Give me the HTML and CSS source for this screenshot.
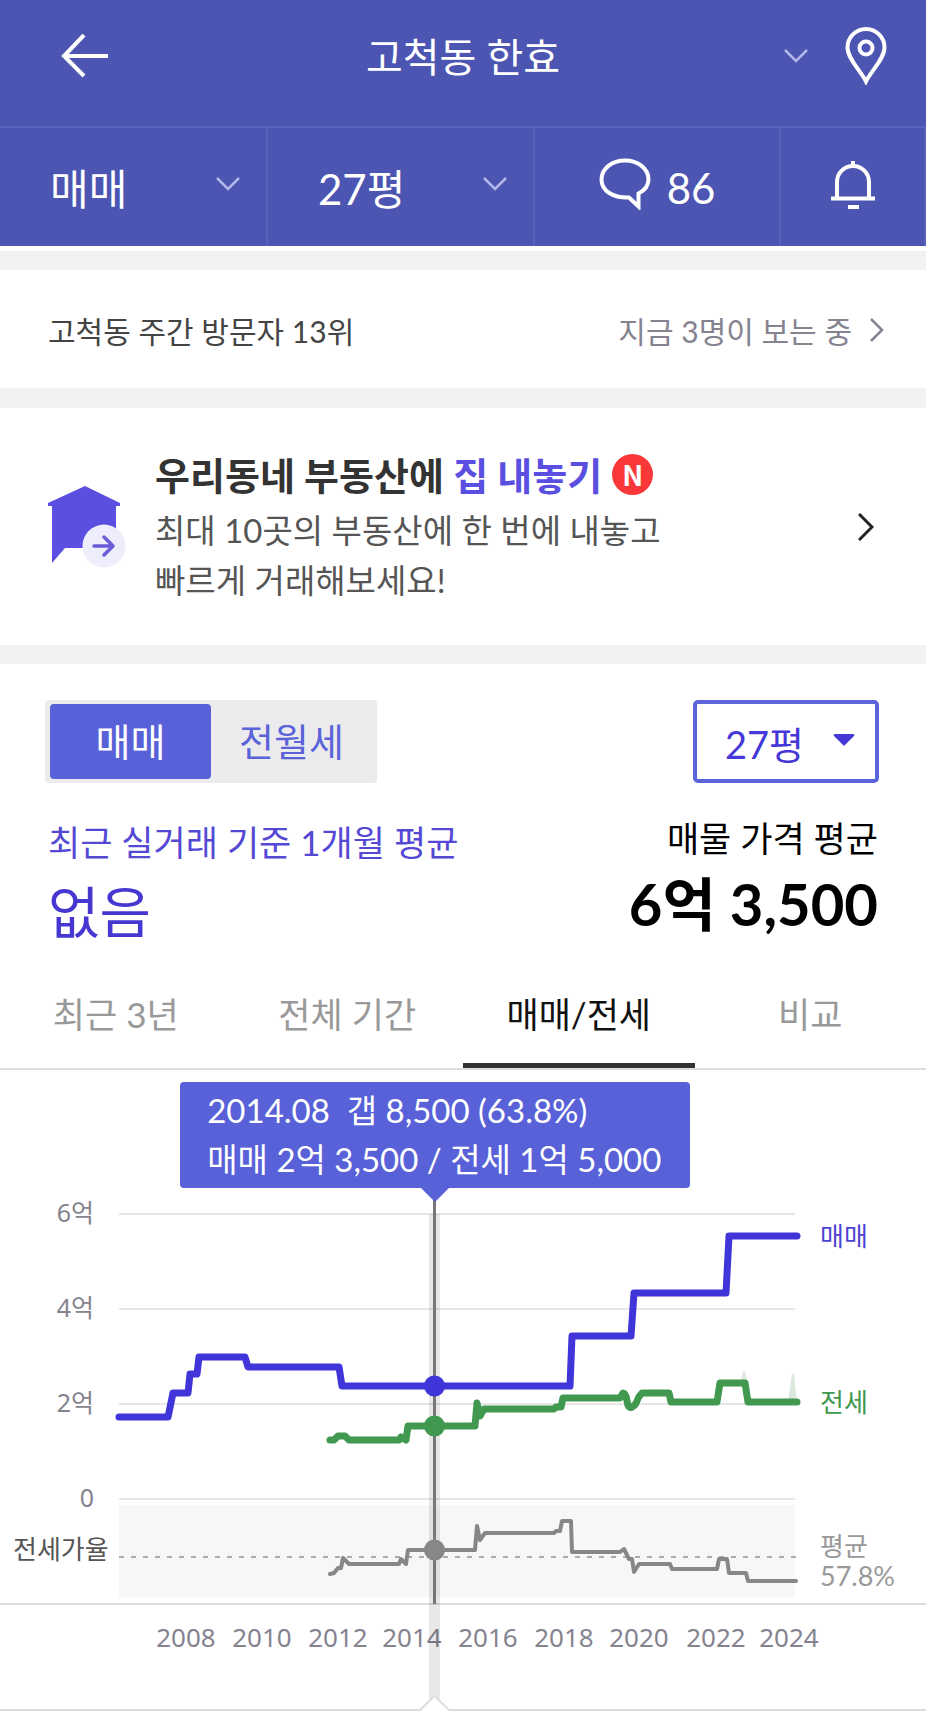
FILE: index.html
```html
<!DOCTYPE html>
<html lang="ko">
<head>
<meta charset="utf-8">
<meta name="viewport" content="width=device-width, initial-scale=1">
<title>고척동 한효</title>
<link rel="stylesheet" href="styles.css">
</head>
<body>
<header class="header">
  <div class="header-top">
    <button class="icon-button back" type="button" aria-label="뒤로">
      <svg width="48" height="44" viewBox="0 0 48 44" fill="none" stroke="currentColor" stroke-width="4"><path d="M47 22H3M23 1 3 22l20 20"/></svg>
    </button>
    <button class="title" type="button">고척동 한효</button>
    <svg class="chevron" width="24" height="14" viewBox="0 0 24 14" fill="none" stroke="currentColor" stroke-width="2.500"><path d="m1 1 11 11L23 1"/></svg>
    <button class="icon-button" type="button" aria-label="지도">
      <svg width="42" height="58" viewBox="0 0 42 58" fill="none" stroke="currentColor" stroke-width="4"><path d="M21 54.500C16 44 2.500 32 2.500 20.500a18.500 18.500 0 0 1 37 0C39.500 32 26 44 21 54.500z"/><circle cx="21" cy="21" r="6.500"/></svg>
    </button>
  </div>
  <div class="header-menu">
    <div class="menu-cell menu-select">
      <select aria-label="거래 유형"><option>매매</option><option>전월세</option></select>
      <svg class="chevron" width="24" height="14" viewBox="0 0 24 14" fill="none" stroke="currentColor" stroke-width="2.500"><path d="m1 1 11 11L23 1"/></svg>
    </div>
    <div class="menu-cell menu-select">
      <select aria-label="평형"><option>27평</option></select>
      <svg class="chevron" width="24" height="14" viewBox="0 0 24 14" fill="none" stroke="currentColor" stroke-width="2.500"><path d="m1 1 11 11L23 1"/></svg>
    </div>
    <button class="menu-cell comments" type="button">
      <svg width="52" height="52" viewBox="0 0 52 52" fill="none" stroke="currentColor" stroke-width="4"><path d="M30 39.500C14 40 2.500 33 2.500 21.500 2.500 10.500 13 2.500 26 2.500S49.500 10.500 49.500 21.500c0 7-4 11-10 14v13z"/></svg>
      <span>86</span>
    </button>
    <button class="menu-cell alarm" type="button" aria-label="알림">
      <svg width="44" height="50" viewBox="0 0 44 50" fill="none" stroke="currentColor" stroke-width="4"><path d="M22 1v5M6 38V22a16 16 0 0 1 32 0v16M0 38.500h44M17 47h11"/></svg>
    </button>
  </div>
</header>
<main>
  <section class="visitors">
    <span>고척동 주간 방문자 13위</span>
    <a class="viewing" href="#viewing">지금 3명이 보는 중
      <svg width="14" height="24" viewBox="0 0 14 24" fill="none" stroke="currentColor" stroke-width="2.500"><path d="m1 1 11 11L1 23"/></svg>
    </a>
  </section>
  <a class="promo" href="#sell">
    <svg class="promo-icon" width="78" height="82" viewBox="0 0 78 82"><path fill="#5a4fe0" d="M37 0 72 17v3h-4v42H17L4 77V20H0v-3z"/><circle cx="56" cy="60" r="21.500" fill="#eeedfc"/><path d="M46 60h19M56 51l9 9-9 9" fill="none" stroke="#6b5bd8" stroke-width="3.500" stroke-linecap="round" stroke-linejoin="round"/></svg>
    <span class="promo-text">
      <strong class="promo-title"><span>우리동네 부동산에 <em>집 내놓기</em></span><span class="badge">N</span></strong>
      <span class="promo-body">최대 10곳의 부동산에 한 번에 내놓고<br>빠르게 거래해보세요!</span>
    </span>
    <svg class="promo-arrow" width="16" height="28" viewBox="0 0 16 28" fill="none" stroke="currentColor" stroke-width="3"><path d="m1 1 13 13L1 27"/></svg>
  </a>
  <section class="price">
    <div class="filters">
      <div class="toggle">
        <button class="selected" type="button" aria-pressed="true">매매</button>
        <button type="button" aria-pressed="false">전월세</button>
      </div>
      <div class="area">
        <select aria-label="면적 선택"><option>27평</option></select>
        <svg width="22" height="14" viewBox="0 0 22 14"><path fill="#4537d8" d="M2 1h18q2 0 1 2l-9 9q-1 1-2 0L1 3Q0 1 2 1z"/></svg>
      </div>
    </div>
    <div class="averages">
      <div class="recent"><p>최근 실거래 기준 1개월 평균</p><strong>없음</strong></div>
      <div class="asking"><p>매물 가격 평균</p><strong>6억 3,500</strong></div>
    </div>
    <div class="tabs" role="tablist">
      <button type="button" role="tab">최근 3년</button>
      <button type="button" role="tab">전체 기간</button>
      <button class="active" type="button" role="tab" aria-selected="true">매매/전세</button>
      <button type="button" role="tab">비교</button>
    </div>
    <div class="chart">
      <svg class="plot" viewBox="0 0 926 654" role="img" aria-label="매매 전세 가격 추이">
        <rect class="ratio-bg" x="119" y="435" width="676" height="92"/>
        <path class="grid" d="M119 144h676M119 239h676M119 334h676M119 429h676"/>
        <path class="rule" d="M0 534h926"/>
        <g class="axis years">
          <text x="186" y="577">2008</text><text x="262" y="577">2010</text><text x="338" y="577">2012</text>
          <text x="412" y="577">2014</text><text x="488" y="577">2016</text><text x="564" y="577">2018</text>
          <text x="639" y="577">2020</text><text x="716" y="577">2022</text><text x="789" y="577">2024</text>
        </g>
        <path class="cursor-band" d="M429 144h11v496h-11z"/>
        <path class="average" d="M119 487h682"/>
        <path class="cursor" d="M434.500 125v409"/>
        <path class="outliers" d="M740 313l3-12h2l3 12zM788 332l4-28h2l3 28z"/>
        <path class="ratio" d="M330 504l4-1 4-5h3l2-10 6 6h50l2-5 5 5 2-14h67l2-24 3 14 5-7h69l2-2h4l2-10h9l1 31h48l4-3 5 10h3l2 13 5-8h31l2 5h45l2-10h8l2 14h17l2 8h48"/>
        <path class="lease" d="M330 370h4l4-4h7l4 4h50l2-3 5 3 2-14h67l2-23 3 13 4-7h70l2-2h5l2-9h57l3-5q3 0 4 8t5 6 5-6 5-8h27l2 9h46l3-19h25l3 19h49"/>
        <path class="sale" d="M119 347h49l5-24h15l2-19h7l2-17h46l3 10h91l3 19h228l2-50h59l3-43h92l3-57h68"/>
        <circle cx="434.500" cy="316" r="10.500" fill="#4035d8"/>
        <circle cx="434.500" cy="356" r="10.500" fill="#40994f"/>
        <circle cx="434.500" cy="480" r="10.500" fill="#878787"/>
        <g class="axis values">
          <text x="94" y="152">6억</text><text x="94" y="247">4억</text><text x="94" y="342">2억</text><text x="94" y="437">0</text>
        </g>
        <text class="ratio-label" x="13" y="489">전세가율</text>
        <text class="sale-label" x="820" y="176">매매</text>
        <text class="lease-label" x="820" y="342">전세</text>
        <g class="average-label"><text x="820" y="486">평균</text><text class="percent" x="820" y="516">57.8%</text></g>
        <path class="notch" d="M0 640h420l14.500-14L449 640h477"/>
      </svg>
      <div class="tooltip">2014.08&nbsp; 갭 8,500 (63.8%)<br>매매 2억 3,500 / 전세 1억 5,000</div>
    </div>
  </section>
</main>
</body>
</html>
```
FILE: styles.css
```css
* { box-sizing: border-box; }
body {
  margin: 0;
  background: #fff;
  color: #444;
  font-family: Lato, "Noto Sans CJK KR", sans-serif;
  font-size: 30px;
}
button, select {
  margin: 0;
  padding: 0;
  border: 0;
  background: none;
  color: inherit;
  font: inherit;
  appearance: none;
}
a { color: inherit; text-decoration: none; }
p { margin: 0; }
svg { display: block; flex: none; }

.header { background: #4d55b2; color: #fff; }
.header-top {
  display: grid;
  grid-template-columns: 170px 1fr 80px 60px;
  align-items: center;
  height: 126px;
  padding: 0 30px 14px 0;
}
.icon-button { justify-self: center; }
.title { font-size: 40px; padding-bottom: 3px; }
.header-top .chevron { justify-self: center; }
.chevron { color: #b4b7ec; pointer-events: none; }
.header-menu {
  display: grid;
  grid-template-columns: 268fr 267fr 246fr 145fr;
  height: 120px;
  border-top: 2px solid #5a61b8;
}
.menu-cell {
  display: flex;
  align-items: center;
  border-right: 2px solid #5a61b8;
  font-size: 42px;
}
.menu-select { display: grid; }
.menu-select > * { grid-area: 1 / 1; }
.menu-select select { width: 100%; height: 100%; padding-left: 50px; padding-top: 4px; }
.menu-select .chevron { justify-self: end; margin: 0 26px 6px 0; }
.comments, .alarm { justify-content: center; }
.comments { gap: 16px; padding-bottom: 6px; }
.comments span { padding-top: 8px; }
.alarm { padding-bottom: 4px; }

.visitors {
  display: flex;
  align-items: center;
  justify-content: space-between;
  margin-top: 5px;
  height: 157px;
  padding: 2px 42px 0 48px;
  border: solid #f2f2f2;
  border-width: 19px 0 20px;
}
.viewing { display: flex; align-items: center; gap: 18px; color: #85838f; }
.promo {
  display: grid;
  grid-template-columns: 107px 1fr 16px;
  align-items: center;
  height: 256px;
  padding: 0 52px 0 48px;
  border-bottom: 19px solid #f2f2f2;
}
.promo-text { display: grid; }
.promo-title { display: flex; align-items: center; gap: 10px; padding-bottom: 4px; color: #333; font-size: 38px; line-height: 52px; }
.promo-title em { color: #5a4fe0; font-style: normal; }
.badge {
  width: 41px;
  height: 41px;
  border-radius: 50%;
  background: #fb3839;
  color: #fff;
  font: bold 28px/41px "Noto Sans CJK KR", sans-serif;
  text-align: center;
}
.promo-body { color: #555; font-size: 33px; line-height: 50px; }
.promo-arrow { color: #222; }

.filters { display: flex; justify-content: space-between; padding: 36px 47px 0 45px; }
.toggle {
  display: grid;
  grid-template-columns: 161px 161px;
  padding: 4px 5px;
  height: 83px;
  border-radius: 4px;
  background: #ebebed;
  color: #5a63d8;
  font-size: 38px;
}
.toggle button { border-radius: 4px; padding-bottom: 4px; }
.toggle .selected { background: #5861d8; color: #fff; }
.area {
  display: grid;
  align-items: center;
  width: 186px;
  height: 83px;
  border: 4px solid #5b64d8;
  border-radius: 5px;
  color: #4537d8;
}
.area > * { grid-area: 1 / 1; }
.area select { width: 100%; height: 100%; padding: 4px 0 0 28px; font-size: 38px; }
.area svg { justify-self: end; margin: 0 20px 4px 0; pointer-events: none; }
.averages { display: flex; justify-content: space-between; padding: 29px 48px 0; font-size: 35px; }
.recent { color: #5548d4; padding-top: 4px; }
.recent p, .asking p { line-height: 52px; }
.recent strong { display: block; padding-top: 4px; color: #4537d0; font-size: 56px; font-weight: 400; line-height: 80px; }
.asking { color: #000; text-align: right; }
.asking strong { display: block; font-size: 58px; line-height: 80px; }
.tabs { display: grid; grid-template-columns: repeat(4, 1fr); margin-top: 10px; height: 108px; border-bottom: 2px solid #ddd; }
.tabs button { border-bottom: 5px solid transparent; color: #999; font-size: 35px; }
.tabs .active { border-color: #333; color: #111; }

.chart { position: relative; }
.plot { width: 100%; height: auto; font-size: 26px; }
.ratio-bg { fill: #f7f7f7; }
.grid { stroke: #e6e6e6; stroke-width: 2; }
.rule { stroke: #ddd; stroke-width: 2; }
.cursor-band { fill: #000; fill-opacity: .09; }
.cursor { stroke: #777; stroke-width: 3; }
.average { stroke: #aaa; stroke-width: 2; stroke-dasharray: 5 7; }
.outliers { fill: #dce9df; }
.sale, .lease, .ratio { fill: none; stroke-linecap: round; stroke-linejoin: round; }
.sale { stroke: #4035d8; stroke-width: 7; }
.lease { stroke: #40994f; stroke-width: 7; }
.ratio { stroke: #878787; stroke-width: 4; }
.axis { fill: #85838f; font-family: "Noto Sans", "Noto Sans CJK KR", sans-serif; }
.years { text-anchor: middle; }
.values { text-anchor: end; font-size: 25px; }
.ratio-label { fill: #555; }
.sale-label { fill: #4f42d4; }
.lease-label { fill: #40994f; }
.average-label { fill: #999; }
.percent { font-size: 27px; }
.notch { fill: #fff; stroke: #ddd; stroke-width: 2; }
.tooltip {
  position: absolute;
  top: 12px;
  left: 47%;
  width: 510px;
  margin-left: -255px;
  padding: 4px 27px;
  border-radius: 4px;
  background: #5861d8;
  color: #fff;
  font-size: 33px;
  line-height: 49px;
  white-space: nowrap;
}
.tooltip::after {
  content: "";
  position: absolute;
  top: 100%;
  left: 50%;
  margin-left: -14px;
  border: 14px solid transparent;
  border-top-color: #5861d8;
}
```
